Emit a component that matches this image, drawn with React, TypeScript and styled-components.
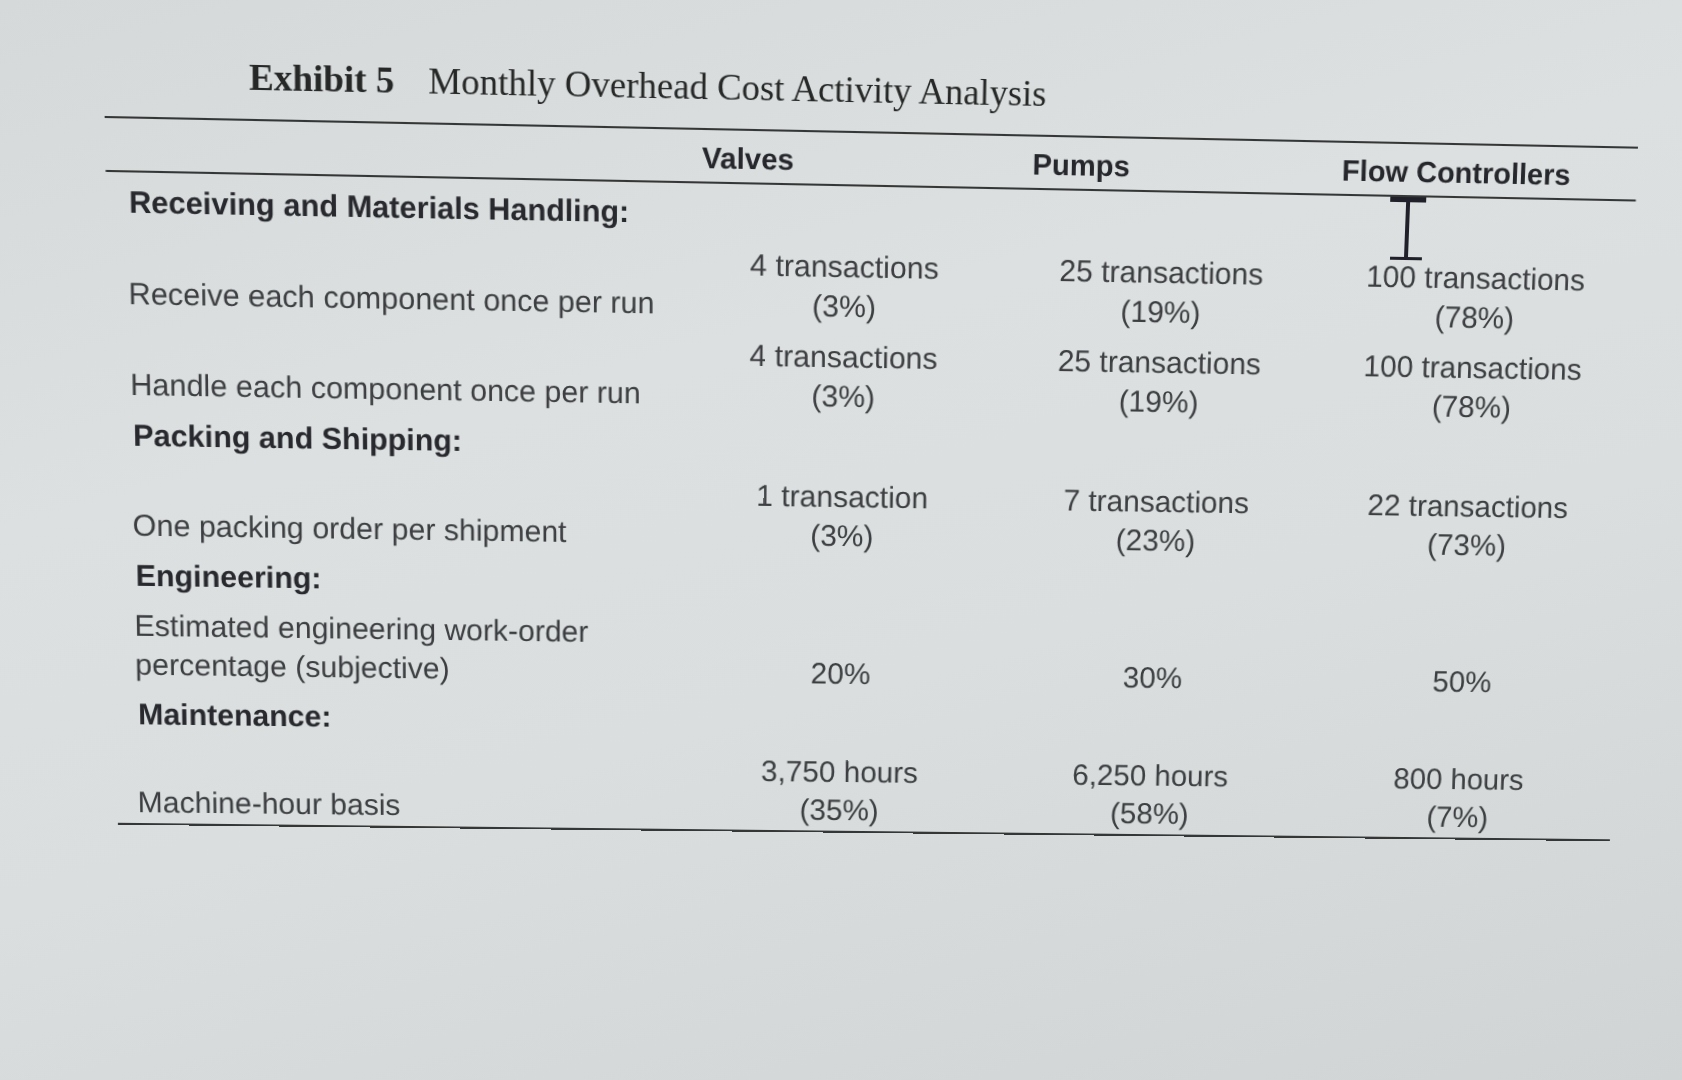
import { Fragment } from "react";
import styled, { createGlobalStyle } from "styled-components";

const GlobalStyle = createGlobalStyle`
  html, body {
    margin: 0;
    padding: 0;
  }
  body {
    width: 1682px;
    height: 1080px;
    overflow: hidden;
    background: linear-gradient(165deg, #d5d9d9 0%, #dde0e0 35%, #dadede 60%, #d0d4d4 100%);
    font-family: "Liberation Sans", Arial, sans-serif;
  }
`;

// the photo is taken at a slight angle, so the whole sheet is tilted a little
const Page = styled.main`
  position: relative;
  width: 1682px;
  height: 1080px;
  box-sizing: border-box;
  padding-top: 74px;
  transform: perspective(2000px) rotateY(1.4deg) rotateX(-4.5deg) rotate(0.85deg);
`;

const Title = styled.h1`
  margin: 0 0 18px 256px;
  display: flex;
  gap: 33px;
  font-family: "Liberation Serif", "Times New Roman", serif;
  font-size: 36px;
  line-height: 44px;
  font-weight: 400;
  color: #262727;
`;

const Exhibit = styled.span`
  font-weight: 700;
`;

const Table = styled.section`
  margin-left: 116px;
  width: 1511px;
  border-top: 2px solid #353737;
  border-bottom: 2px solid #353737;
  transform: skewX(0.4deg);
  transform-origin: top center;
`;

const HeaderRow = styled.div`
  display: grid;
  grid-template-columns: 507px 240px 418px 330px;
  padding: 10px 0 6px;
  border-bottom: 2px solid #353737;
`;

const HeadCell = styled.div`
  text-align: center;
  font-size: 29px;
  line-height: 34px;
  font-weight: 700;
  color: #26272c;
`;

const Body = styled.div`
  display: flex;
  flex-direction: column;
  gap: 11px;
  padding: 9px 0 2px;
`;

const SectionTitle = styled.div`
  padding-left: 22px;
  font-size: 30px;
  line-height: 39px;
  font-weight: 700;
  color: #28292e;
`;

const Row = styled.div`
  display: grid;
  grid-template-columns: 566px 314px 316px 314px;
  align-items: end;
`;

const Label = styled.div`
  padding-left: 20px;
  font-size: 30px;
  line-height: 39px;
  color: #3c3e41;
`;

const Value = styled.div`
  text-align: center;
  font-size: 30px;
  line-height: 39px;
  color: #3c3e41;
`;

const Cursor = styled.svg`
  position: absolute;
  left: 1381px;
  top: 190px;
`;

type Line = { label: string[]; values: string[][] };

const sections: { title: string; rows: Line[] }[] = [
  {
    title: "Receiving and Materials Handling:",
    rows: [
      {
        label: ["Receive each component once per run"],
        values: [
          ["4 transactions", "(3%)"],
          ["25 transactions", "(19%)"],
          ["100 transactions", "(78%)"],
        ],
      },
      {
        label: ["Handle each component once per run"],
        values: [
          ["4 transactions", "(3%)"],
          ["25 transactions", "(19%)"],
          ["100 transactions", "(78%)"],
        ],
      },
    ],
  },
  {
    title: "Packing and Shipping:",
    rows: [
      {
        label: ["One packing order per shipment"],
        values: [
          ["1 transaction", "(3%)"],
          ["7 transactions", "(23%)"],
          ["22 transactions", "(73%)"],
        ],
      },
    ],
  },
  {
    title: "Engineering:",
    rows: [
      {
        label: ["Estimated engineering work-order", "percentage (subjective)"],
        values: [["20%"], ["30%"], ["50%"]],
      },
    ],
  },
  {
    title: "Maintenance:",
    rows: [
      {
        label: ["Machine-hour basis"],
        values: [
          ["3,750 hours", "(35%)"],
          ["6,250 hours", "(58%)"],
          ["800 hours", "(7%)"],
        ],
      },
    ],
  },
];

function Lines({ lines }: { lines: string[] }) {
  return (
    <>
      {lines.map((l) => (
        <div key={l}>{l}</div>
      ))}
    </>
  );
}

export default function App() {
  return (
    <>
      <GlobalStyle />
      <Page>
        <Title>
          <Exhibit>Exhibit 5</Exhibit>
          <span>Monthly Overhead Cost Activity Analysis</span>
        </Title>
        <Table>
          <HeaderRow>
            <div />
            <HeadCell>Valves</HeadCell>
            <HeadCell>Pumps</HeadCell>
            <HeadCell>Flow Controllers</HeadCell>
          </HeaderRow>
          <Body>
            {sections.map((s) => (
              <Fragment key={s.title}>
                <SectionTitle>{s.title}</SectionTitle>
                {s.rows.map((r) => (
                  <Row key={r.label[0]}>
                    <Label>
                      <Lines lines={r.label} />
                    </Label>
                    {r.values.map((v, i) => (
                      <Value key={i}>
                        <Lines lines={v} />
                      </Value>
                    ))}
                  </Row>
                ))}
              </Fragment>
            ))}
          </Body>
        </Table>
        <Cursor width="36" height="63" viewBox="0 0 36 63">
          <rect x="0" y="0" width="36" height="5" fill="#1f2029" />
          <rect x="16" y="4" width="4" height="56" fill="#1f2029" />
          <rect x="2" y="59" width="32" height="3" fill="#1f2029" />
        </Cursor>
      </Page>
    </>
  );
}
